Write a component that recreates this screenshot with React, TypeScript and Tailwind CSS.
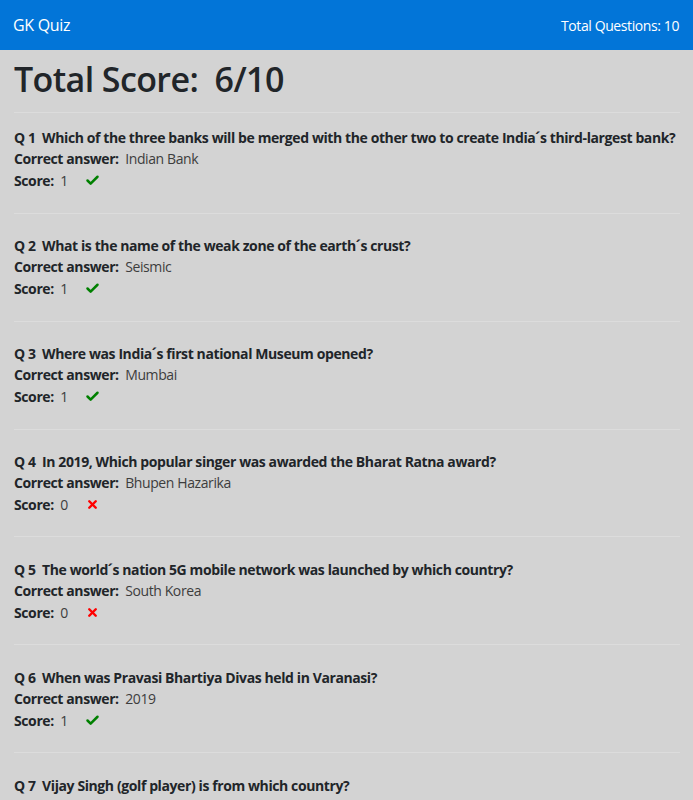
import { Check, X } from "lucide-react"

interface Result {
  id: number
  question: string
  answer: string
  score: number
}

const results: Result[] = [
  { id: 1, question: "Which of the three banks will be merged with the other two to create India\u00b4s third-largest bank?", answer: "Indian Bank", score: 1 },
  { id: 2, question: "What is the name of the weak zone of the earth\u00b4s crust?", answer: "Seismic", score: 1 },
  { id: 3, question: "Where was India\u00b4s first national Museum opened?", answer: "Mumbai", score: 1 },
  { id: 4, question: "In 2019, Which popular singer was awarded the Bharat Ratna award?", answer: "Bhupen Hazarika", score: 0 },
  { id: 5, question: "The world\u00b4s nation 5G mobile network was launched by which country?", answer: "South Korea", score: 0 },
  { id: 6, question: "When was Pravasi Bhartiya Divas held in Varanasi?", answer: "2019", score: 1 },
  { id: 7, question: "Vijay Singh (golf player) is from which country?", answer: "Fiji", score: 1 },
]

export default function App() {
  return (
    <div className="min-h-screen bg-[#d3d3d3] text-[#212529]" style={{ fontFamily: '"Open Sans", "Noto Sans", sans-serif' }}>
      <nav className="h-[50px] bg-[#0275d8] text-white flex items-center justify-between pl-[13px] pr-[14px]">
        <span className="text-[16px] tracking-[-0.3px]">GK Quiz</span>
        <span className="text-[14px] tracking-[-0.4px]">Total Questions: 10</span>
      </nav>

      <div className="pl-[14px] pr-[13px]">
        <h1 className="text-[34px] font-semibold leading-[1.2] tracking-[-0.6px] pt-[9px] pb-[12px] whitespace-pre">Total Score:  6/10</h1>
        <hr className="border-t border-[#dcdcdc] mb-[14px]" />

        {results.map((r) => (
          <div key={r.id}>
            <div className="text-[14px] leading-[21.6px] tracking-[-0.4px]">
              <p className="font-bold whitespace-pre">Q {r.id}  {r.question}</p>
              <p>
                <span className="font-bold">Correct answer:</span>
                <span className="text-[#3d3d3d]">{"\u00a0\u00a0" + r.answer}</span>
              </p>
              <p className="flex items-center">
                <span className="font-bold">Score:</span>
                <span className="text-[#3d3d3d]">{"\u00a0\u00a0" + r.score}</span>
                {r.score === 1 ? (
                  <Check className="w-[15px] h-[15px] ml-[17px] text-[#008000]" strokeWidth={4} />
                ) : (
                  <X className="w-[13px] h-[13px] ml-[18px] text-[#ff0000]" strokeWidth={4.5} />
                )}
              </p>
            </div>
            <hr className="border-t border-[#dcdcdc] mt-[21px] mb-[21.2px]" />
          </div>
        ))}
      </div>
    </div>
  )
}
